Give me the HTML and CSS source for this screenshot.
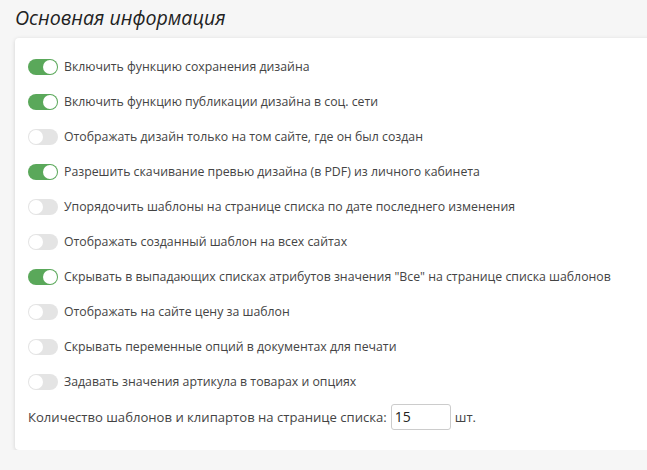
FILE: index.html
```html
<!DOCTYPE html>
<html lang="ru">
<head>
<meta charset="utf-8">
<link rel="stylesheet" href="styles.css">
</head>
<body>
<div class="page">
  <h2 class="title">Основная информация</h2>
  <div class="card">
    <label class="row"><span class="toggle on"></span><span>Включить функцию сохранения дизайна</span></label>
    <label class="row"><span class="toggle on"></span><span>Включить функцию публикации дизайна в соц. сети</span></label>
    <label class="row"><span class="toggle"></span><span>Отображать дизайн только на том сайте, где он был создан</span></label>
    <label class="row"><span class="toggle on"></span><span>Разрешить скачивание превью дизайна (в PDF) из личного кабинета</span></label>
    <label class="row"><span class="toggle"></span><span>Упорядочить шаблоны на странице списка по дате последнего изменения</span></label>
    <label class="row"><span class="toggle"></span><span>Отображать созданный шаблон на всех сайтах</span></label>
    <label class="row"><span class="toggle on"></span><span>Скрывать в выпадающих списках атрибутов значения "Все" на странице списка шаблонов</span></label>
    <label class="row"><span class="toggle"></span><span>Отображать на сайте цену за шаблон</span></label>
    <label class="row"><span class="toggle"></span><span>Скрывать переменные опций в документах для печати</span></label>
    <label class="row"><span class="toggle"></span><span>Задавать значения артикула в товарах и опциях</span></label>
    <div class="count">
      <span>Количество шаблонов и клипартов на странице списка:</span>
      <input class="num" type="text" value="15">
      <span>шт.</span>
    </div>
  </div>
</div>
</body>
</html>
```
FILE: styles.css
```css
html, body {
  margin: 0;
  padding: 0;
  background: #f6f6f6;
}
body {
  font-family: "Open Sans", "Noto Sans", sans-serif;
  font-size: 12.3px;
  color: #444;
  overflow: hidden;
}
.page {
  padding: 0 0 0 15px;
  width: 700px;
}
.title {
  margin: 0;
  height: 38px;
  line-height: 36px;
  font-size: 19.6px;
  font-weight: 400;
  font-style: italic;
  color: #222;
}
.card {
  background: #fff;
  border-radius: 4px;
  box-shadow: 0 1px 4px rgba(0,0,0,0.15);
  padding: 11px 13px 16px;
  display: flex;
  flex-direction: column;
}
.row {
  display: flex;
  align-items: center;
  gap: 6px;
  height: 35px;
  line-height: 18px;
}
.toggle {
  flex: none;
  width: 30px;
  height: 16px;
  border-radius: 8px;
  background: #e4e4e4;
  position: relative;
}
.toggle::after {
  content: "";
  position: absolute;
  left: 1px;
  top: 1px;
  width: 14px;
  height: 14px;
  border-radius: 50%;
  background: #fff;
}
.toggle.on {
  background: #5aa85a;
}
.toggle.on::after {
  left: 15px;
}
.count {
  display: flex;
  align-items: center;
  gap: 4px;
  height: 35px;
  font-size: 13.1px;
}
.num {
  width: 60px;
  height: 26px;
  box-sizing: border-box;
  border: 1px solid #ccc;
  border-radius: 3px;
  padding: 0 3px;
  font: inherit;
  font-size: 14px;
  color: #222;
}
```
